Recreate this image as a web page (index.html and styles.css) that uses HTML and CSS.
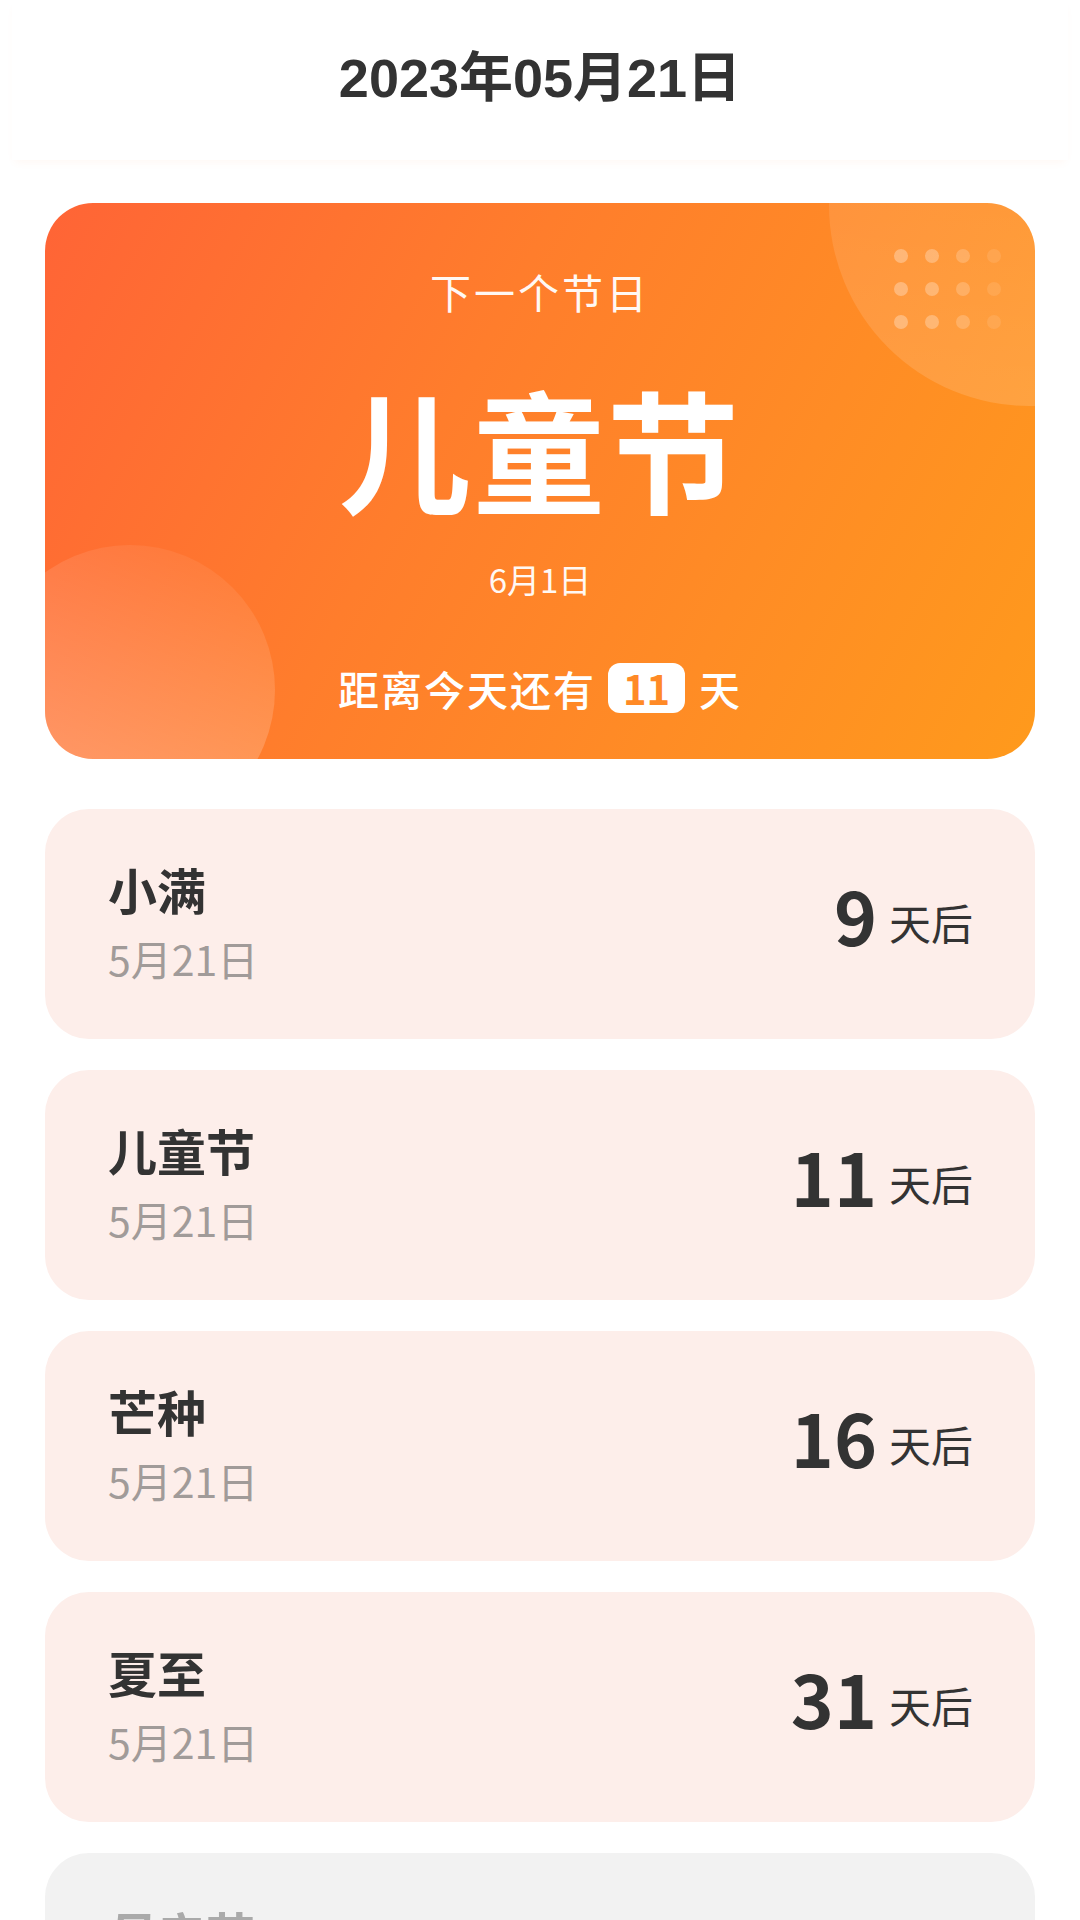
FILE: index.html
```html
<!DOCTYPE html>
<html lang="zh-CN">
<head>
<meta charset="utf-8">
<title>节日倒计时</title>
<link rel="stylesheet" href="styles.css">
</head>
<body>
<header class="top">
  <h1 class="today">2023年05月21日</h1>
</header>
<main class="page">
  <section class="hero">
    <div class="hero-circle hero-circle-tr"></div>
    <div class="hero-circle hero-circle-bl"></div>
    <div class="dots">
      <span class="dot c1"></span><span class="dot c2"></span><span class="dot c3"></span><span class="dot c4"></span>
      <span class="dot c1"></span><span class="dot c2"></span><span class="dot c3"></span><span class="dot c4"></span>
      <span class="dot c1"></span><span class="dot c2"></span><span class="dot c3"></span><span class="dot c4"></span>
    </div>
    <div class="hero-label">下一个节日</div>
    <div class="hero-name">儿童节</div>
    <div class="hero-date">6月1日</div>
    <div class="hero-count">距离今天还有<span class="badge">11</span>天</div>
  </section>

  <ul class="list">
    <li class="item">
      <div class="item-left">
        <div class="item-title">小满</div>
        <div class="item-date">5月21日</div>
      </div>
      <div class="item-right"><span class="num">9</span><span class="unit">天后</span></div>
    </li>
    <li class="item">
      <div class="item-left">
        <div class="item-title">儿童节</div>
        <div class="item-date">5月21日</div>
      </div>
      <div class="item-right"><span class="num">11</span><span class="unit">天后</span></div>
    </li>
    <li class="item">
      <div class="item-left">
        <div class="item-title">芒种</div>
        <div class="item-date">5月21日</div>
      </div>
      <div class="item-right"><span class="num">16</span><span class="unit">天后</span></div>
    </li>
    <li class="item">
      <div class="item-left">
        <div class="item-title">夏至</div>
        <div class="item-date">5月21日</div>
      </div>
      <div class="item-right"><span class="num">31</span><span class="unit">天后</span></div>
    </li>
    <li class="item item-past">
      <div class="item-left">
        <div class="item-title">母亲节</div>
        <div class="item-date">5月14日</div>
      </div>
      <div class="item-right"><span class="num">7</span><span class="unit">天前</span></div>
    </li>
  </ul>
</main>
</body>
</html>
```
FILE: styles.css
```css
html, body {
  margin: 0;
  padding: 0;
  background: #ffffff;
}
body {
  font-family: "Noto Sans CJK SC", "Noto Sans", sans-serif;
  color: #333333;
  overflow: hidden;
}
.top {
  height: 160px;
  margin: 0 12px;
  display: flex;
  align-items: center;
  justify-content: center;
  box-shadow: 0 5px 8px -3px rgba(255, 140, 80, 0.07);
}
.today {
  margin: 0;
  padding-bottom: 14px;
  font-family: "Liberation Sans", "Noto Sans CJK SC", sans-serif;
  font-weight: bold;
  font-size: 54px;
  color: #333333;
}
.page {
  padding: 43px 45px 0;
}
.hero {
  position: relative;
  overflow: hidden;
  height: 556px;
  border-radius: 48px;
  background: linear-gradient(118deg, #ff6436 0%, #ff7d2c 40%, #ff8c25 70%, #ff9a1c 100%);
  color: #ffffff;
  display: flex;
  flex-direction: column;
  align-items: center;
  box-sizing: border-box;
  padding-top: 58px;
}
.hero-circle {
  position: absolute;
  border-radius: 50%;
}
.hero-circle-tr {
  left: 784px;
  top: -199px;
  width: 402px;
  height: 402px;
  background: linear-gradient(180deg, rgba(255, 255, 255, 0.06), rgba(255, 255, 255, 0.14));
}
.hero-circle-bl {
  left: -60px;
  top: 342px;
  width: 290px;
  height: 290px;
  background: linear-gradient(200deg, rgba(255, 255, 255, 0.06) 10%, rgba(255, 255, 255, 0.3) 90%);
}
.dots {
  position: absolute;
  left: 849px;
  top: 46px;
  display: grid;
  grid-template-columns: repeat(4, 14px);
  grid-auto-rows: 14px;
  column-gap: 17px;
  row-gap: 19px;
}
.dot {
  display: block;
  width: 14px;
  height: 14px;
  border-radius: 50%;
  background: #ffffff;
}
.dot.c1 { opacity: 0.3; }
.dot.c2 { opacity: 0.28; }
.dot.c3 { opacity: 0.2; }
.dot.c4 { opacity: 0.1; }
.hero-label {
  position: relative;
  font-size: 41px;
  line-height: 60px;
  letter-spacing: 3px;
  opacity: 0.95;
}
.hero-name {
  position: relative;
  margin-top: 46px;
  font-size: 132px;
  font-weight: bold;
  line-height: 160px;
  letter-spacing: 2px;
}
.hero-date {
  position: relative;
  margin-top: 27px;
  font-size: 33px;
  line-height: 50px;
  opacity: 0.95;
}
.hero-count {
  position: relative;
  margin-top: 54px;
  font-size: 41px;
  font-weight: 500;
  line-height: 60px;
  letter-spacing: 2px;
  display: flex;
  align-items: center;
}
.badge {
  display: inline-flex;
  align-items: center;
  justify-content: center;
  width: 77px;
  height: 50px;
  margin: 0 14px 0 12px;
  border-radius: 12px;
  background: #ffffff;
  color: #ff8a26;
  font-size: 40px;
  font-weight: bold;
  letter-spacing: 0;
}
.list {
  list-style: none;
  margin: 50px 0 0;
  padding: 0;
  display: flex;
  flex-direction: column;
  gap: 31px;
}
.item {
  height: 230px;
  box-sizing: border-box;
  border-radius: 44px;
  background: #fdeeea;
  padding: 49px 62px 0 63px;
  display: flex;
  justify-content: space-between;
  align-items: flex-start;
}
.item-title {
  font-size: 49px;
  font-weight: bold;
  line-height: 62px;
  color: #333333;
}
.item-date {
  margin-top: 10px;
  font-size: 41px;
  line-height: 56px;
  color: #a19b99;
}
.item-right {
  display: flex;
  align-items: baseline;
  margin-top: 11px;
}
.num {
  font-size: 73px;
  font-weight: bold;
  line-height: 90px;
  color: #333333;
}
.unit {
  position: relative;
  top: -6px;
  margin-left: 12px;
  font-size: 42px;
  color: #333333;
}
.item-past {
  background: #f2f2f2;
}
.item-past .item-title,
.item-past .num,
.item-past .unit {
  color: #aaaaaa;
}
```
